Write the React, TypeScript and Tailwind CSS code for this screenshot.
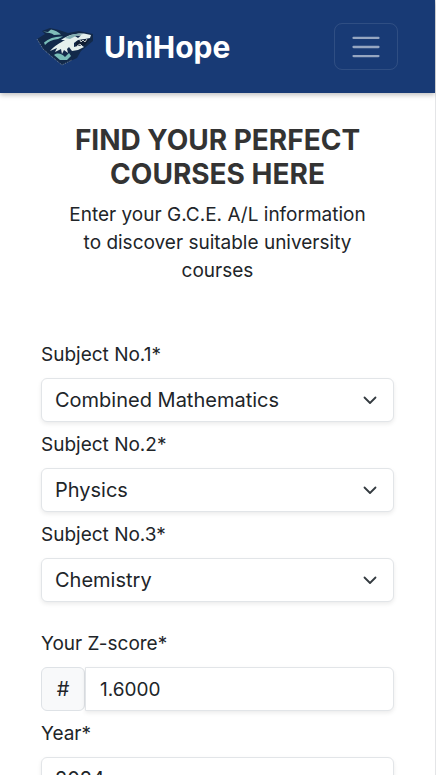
import type { ReactNode } from "react";

const controlClass =
  "h-11 w-full rounded-md border border-[#e2e5e8] bg-white text-[#212529] shadow-[0_2px_4px_rgba(0,0,0,0.08)]";

function SharkLogo() {
  return (
    <svg viewBox="0 0 58 40" className="h-10 w-[58px]" role="img" aria-label="UniHope logo">
      <path d="M1 12 9 7 6 4 14 1 23 3 32 6 43 4 57 7 57 14 51 19 45 24 41 31 26 38 14 28 7 22Z" fill="#12294a" />
      <path d="M1 12 7 22 15 29 26 38 36 33" fill="none" stroke="#8797aa" strokeWidth="0.8" strokeDasharray="1 1" />
      <path d="M7 4.500 12 5 15 2.500C19 3 22 5 25 7.500L18 8C16 6 12 6 7 4.500Z" fill="#7fbdb9" />
      <path d="M8 15.500C13 11 20 9 27 9.500L22 12C16 12.500 12 14.500 9 18Z" fill="#79bdb8" />
      <path d="M25 13C31 8 40 6 48 6.500L55 8 54 11 49 12 42 13 38 16 38 20 45 18 48 20 42 23 36 24 33 20 31 22 32 26 28 23 26 27 25 22 19 25 21 21 14 24C19 18 24 16 29 13Z" fill="#e4efed" />
      <path d="M29 11C34 7 41 6 47 7L40 9 34 12Z" fill="#82aeb2" />
      <path d="M39 9 45 8.500 42 11Z" fill="#12294a" />
      <path d="M40 15 44 13 54 12 49 18 40 19Z" fill="#101d32" />
      <path d="M44 13 45 15 47 13 49 15 51 12M41 19 44 17 46 19" fill="none" stroke="#edf4f2" strokeWidth="0.8" />
      <path d="M18 28C22 25 26 27 29 30L33 26 35 29 31 33 24 33Z" fill="#79bdb8" />
    </svg>
  );
}

function Field({ id, label, children }: { id: string; label: string; children: ReactNode }) {
  return (
    <div className="flex flex-col gap-[9px]">
      <label htmlFor={id} className="text-[19px] leading-7">
        {label}
      </label>
      {children}
    </div>
  );
}

function SelectField({ id, label, options }: { id: string; label: string; options: string[] }) {
  return (
    <Field id={id} label={label}>
      <div className="relative">
        <select id={id} className={`${controlClass} appearance-none pr-10 pl-[13px] text-xl`}>
          {options.map((option) => (
            <option key={option}>{option}</option>
          ))}
        </select>
        <svg viewBox="0 0 16 16" className="pointer-events-none absolute top-3.5 right-4 size-4" aria-hidden="true">
          <path d="m2.5 5.5 5.5 5.5 5.5-5.5" fill="none" stroke="#343a40" strokeWidth="1.8" strokeLinecap="round" strokeLinejoin="round" />
        </svg>
      </div>
    </Field>
  );
}

export default function App() {
  return (
    <div className="min-h-screen border-r border-[#e4e5e7] bg-white font-['Inter','Liberation_Sans',sans-serif] text-[#212529]">
      <nav className="flex items-center justify-between bg-[#183a75] py-[23px] pr-[37px] pl-9 shadow-[0_2px_5px_rgba(0,0,0,0.25)]">
        <a href="#home" className="flex items-center gap-2.5 text-[30px] leading-10 font-bold text-white">
          <SharkLogo />
          UniHope
        </a>
        <button type="button" aria-label="Toggle navigation" className="flex h-[47px] w-16 items-center justify-center rounded-lg border border-white/10">
          <svg viewBox="0 0 30 30" className="size-[34px]" aria-hidden="true">
            <path d="M4 7h22M4 15h22M4 23h22" stroke="#ffffff" strokeOpacity="0.55" strokeWidth="2" strokeLinecap="round" />
          </svg>
        </button>
      </nav>
      <main className="px-[41px] pt-[30px]">
        <header className="px-5 text-center">
          <h1 className="text-[28px] leading-[34px] font-bold text-[#333333]">FIND YOUR PERFECT COURSES HERE</h1>
          <p className="mt-2.5 text-[19px] leading-7">Enter your G.C.E. A/L information to discover suitable university courses</p>
        </header>
        <form className="mt-14 flex flex-col gap-7">
          <div className="flex flex-col gap-[9px]">
            <SelectField id="subject-1" label="Subject No.1*" options={["Combined Mathematics", "Biology"]} />
            <SelectField id="subject-2" label="Subject No.2*" options={["Physics", "Agriculture"]} />
            <SelectField id="subject-3" label="Subject No.3*" options={["Chemistry", "ICT"]} />
          </div>
          <div className="flex flex-col gap-[9px]">
            <Field id="z-score" label="Your Z-score*">
              <div className="flex">
                <span className="flex h-11 w-11 shrink-0 items-center justify-center rounded-md border border-[#dee2e6] bg-[#f8f9fa] text-xl">#</span>
                <input id="z-score" type="text" inputMode="decimal" defaultValue="1.6000" className={`${controlClass} min-w-0 rounded-l-none px-3.5 text-[19px]`} />
              </div>
            </Field>
            <SelectField id="year" label="Year*" options={["2024", "2023", "2022"]} />
          </div>
        </form>
      </main>
    </div>
  );
}
